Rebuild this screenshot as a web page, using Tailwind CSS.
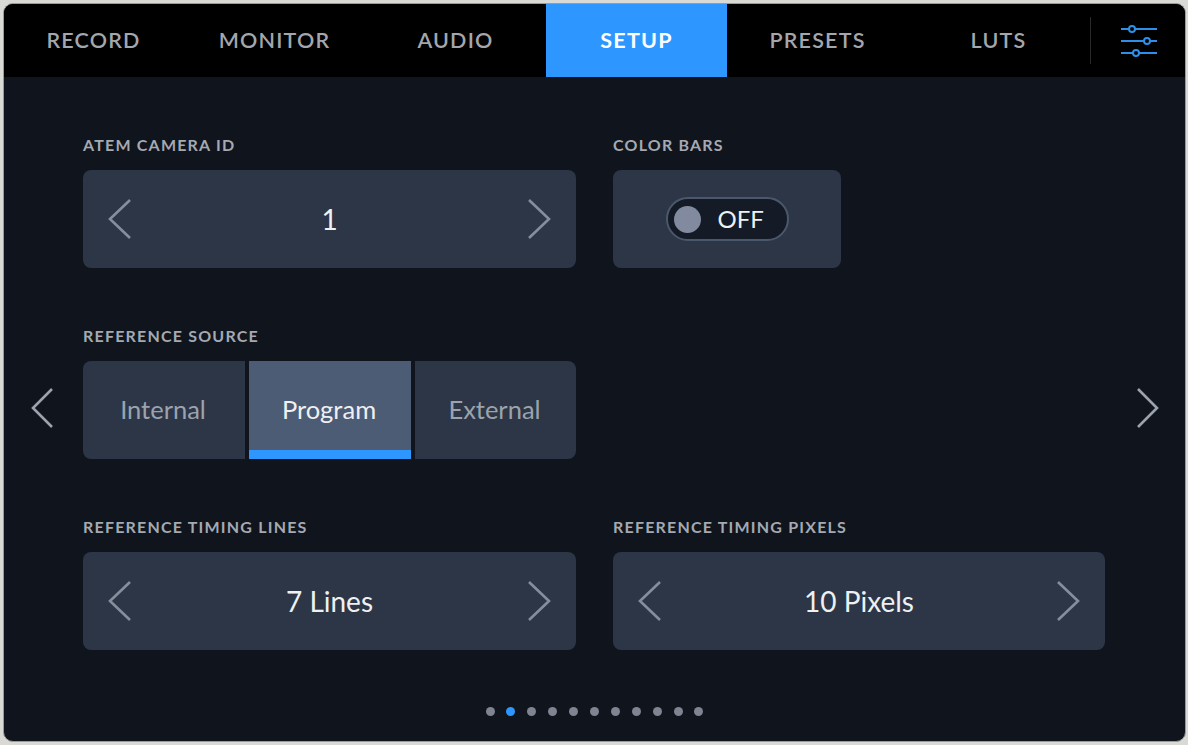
<!DOCTYPE html>
<html lang="en">
<head>
  <meta charset="UTF-8" />
  <meta name="viewport" content="width=device-width, initial-scale=1.0" />
  <title>Setup</title>
  <script src="https://cdn.jsdelivr.net/npm/@tailwindcss/browser@4"></script>
</head>
<body class="bg-[#d9d9d6] font-['Lato',sans-serif]">
  <div class="w-[1188px] h-[745px] p-[3px_2px_3px_3px]">
    <div class="h-[739px] w-[1183px] border border-[#9a9a98] rounded-[10px] overflow-hidden bg-[#10141c] flex flex-col">

      <!-- Tabs -->
      <div class="h-[73px] bg-black flex items-center shrink-0 text-[21.5px] tracking-[1.2px] text-[#a3a7ad] font-semibold">
        <div class="w-[181px] -ml-px h-full flex items-center justify-center">RECORD</div>
        <div class="w-[181px] h-full flex items-center justify-center">MONITOR</div>
        <div class="w-[181px] h-full flex items-center justify-center">AUDIO</div>
        <div class="w-[181px] h-full flex items-center justify-center bg-[#2e96ff] text-white font-bold">SETUP</div>
        <div class="w-[181px] h-full flex items-center justify-center">PRESETS</div>
        <div class="w-[181px] h-full flex items-center justify-center">LUTS</div>
        <div class="w-px h-[47px] bg-[#2a2a2a] ml-px"></div>
        <svg class="ml-[30px]" width="36" height="36" viewBox="0 0 36 36" fill="none" stroke="#2e8fe8" stroke-width="2">
          <path d="M0 6H36M0 18H36M0 30H36" />
          <circle cx="11" cy="6" r="3" fill="#000" />
          <circle cx="26" cy="18" r="3" fill="#000" />
          <circle cx="15" cy="30" r="3" fill="#000" />
        </svg>
      </div>

      <!-- Body -->
      <div class="relative flex-1 pl-[79px] pt-[60px]">
        <svg class="absolute left-[27px] top-[311px]" width="23" height="40" viewBox="0 0 23 40" fill="none" stroke="#9aa3ae" stroke-width="2.6"><path d="M21 1L2 20L21 39" /></svg>
        <svg class="absolute left-[1132px] top-[311px]" width="23" height="40" viewBox="0 0 23 40" fill="none" stroke="#9aa3ae" stroke-width="2.6"><path d="M2 1L21 20L2 39" /></svg>

        <div class="grid grid-cols-[493px_492px] gap-x-[37px] gap-y-[60px]">
          <!-- Camera ID -->
          <div>
            <div class="h-[16px] leading-[16px] mb-[17px] text-[16px] tracking-[1.2px] font-bold text-[#a4a9b2]">ATEM CAMERA ID</div>
            <div class="h-[98px] rounded-[8px] bg-[#2c3646] flex items-center justify-between px-[24px] text-[28px] text-[#eef0f2]">
              <svg width="25" height="40" viewBox="0 0 25 40" fill="none" stroke="#858e9c" stroke-width="2.6"><path d="M23 1L3 20L23 39" /></svg>
              <span>1</span>
              <svg width="25" height="40" viewBox="0 0 25 40" fill="none" stroke="#858e9c" stroke-width="2.6"><path d="M2 1L22 20L2 39" /></svg>
            </div>
          </div>

          <!-- Color bars -->
          <div>
            <div class="h-[16px] leading-[16px] mb-[17px] text-[16px] tracking-[1.2px] font-bold text-[#a4a9b2]">COLOR BARS</div>
            <div class="w-[228px] h-[98px] rounded-[8px] bg-[#2c3646] flex items-center justify-center">
              <div class="w-[123px] h-[44px] rounded-full border-2 border-[#4b586c] bg-[#141a26] flex items-center pl-[6px] gap-[17px]">
                <div class="w-[27px] h-[27px] rounded-full bg-[#828a9f]"></div>
                <span class="text-[24px] text-[#eef0f2]">OFF</span>
              </div>
            </div>
          </div>

          <!-- Reference source -->
          <div>
            <div class="h-[16px] leading-[16px] mb-[17px] text-[16px] tracking-[1.2px] font-bold text-[#a4a9b2]">REFERENCE SOURCE</div>
            <div class="h-[98px] grid grid-cols-[162px_162px_161px] gap-x-[4px] text-[25.5px]">
              <div class="rounded-l-[8px] bg-[#2c3646] flex items-center justify-center pb-[2px] pr-[2px] text-[#9ca3ad]">Internal</div>
              <div class="bg-[#4d5c75] border-b-[9px] border-[#2e96ff] flex items-center justify-center pt-[7px] pr-[2px] text-[#eef0f2]">Program</div>
              <div class="rounded-r-[8px] bg-[#2c3646] flex items-center justify-center pb-[2px] pr-[2px] text-[#9ca3ad]">External</div>
            </div>
          </div>
          <div></div>

          <!-- Timing lines -->
          <div>
            <div class="h-[16px] leading-[16px] mb-[17px] text-[16px] tracking-[1.2px] font-bold text-[#a4a9b2]">REFERENCE TIMING LINES</div>
            <div class="h-[98px] rounded-[8px] bg-[#2c3646] flex items-center justify-between px-[24px] text-[28px] text-[#eef0f2]">
              <svg width="25" height="40" viewBox="0 0 25 40" fill="none" stroke="#858e9c" stroke-width="2.6"><path d="M23 1L3 20L23 39" /></svg>
              <span>7 Lines</span>
              <svg width="25" height="40" viewBox="0 0 25 40" fill="none" stroke="#858e9c" stroke-width="2.6"><path d="M2 1L22 20L2 39" /></svg>
            </div>
          </div>

          <!-- Timing pixels -->
          <div>
            <div class="h-[16px] leading-[16px] mb-[17px] text-[16px] tracking-[1.2px] font-bold text-[#a4a9b2]">REFERENCE TIMING PIXELS</div>
            <div class="h-[98px] rounded-[8px] bg-[#2c3646] flex items-center justify-between px-[24px] text-[28px] text-[#eef0f2]">
              <svg width="25" height="40" viewBox="0 0 25 40" fill="none" stroke="#858e9c" stroke-width="2.6"><path d="M23 1L3 20L23 39" /></svg>
              <span>10 Pixels</span>
              <svg width="25" height="40" viewBox="0 0 25 40" fill="none" stroke="#858e9c" stroke-width="2.6"><path d="M2 1L22 20L2 39" /></svg>
            </div>
          </div>
        </div>

        <!-- Page dots -->
        <div class="flex justify-center gap-[11.9px] mt-[57px] -ml-[79px]">
          <div class="w-[9px] h-[9px] rounded-full bg-[#7e8490]"></div>
          <div class="w-[9px] h-[9px] rounded-full bg-[#2e96ff]"></div>
          <div class="w-[9px] h-[9px] rounded-full bg-[#7e8490]"></div>
          <div class="w-[9px] h-[9px] rounded-full bg-[#7e8490]"></div>
          <div class="w-[9px] h-[9px] rounded-full bg-[#7e8490]"></div>
          <div class="w-[9px] h-[9px] rounded-full bg-[#7e8490]"></div>
          <div class="w-[9px] h-[9px] rounded-full bg-[#7e8490]"></div>
          <div class="w-[9px] h-[9px] rounded-full bg-[#7e8490]"></div>
          <div class="w-[9px] h-[9px] rounded-full bg-[#7e8490]"></div>
          <div class="w-[9px] h-[9px] rounded-full bg-[#7e8490]"></div>
          <div class="w-[9px] h-[9px] rounded-full bg-[#7e8490]"></div>
        </div>
      </div>
    </div>
  </div>
</body>
</html>
